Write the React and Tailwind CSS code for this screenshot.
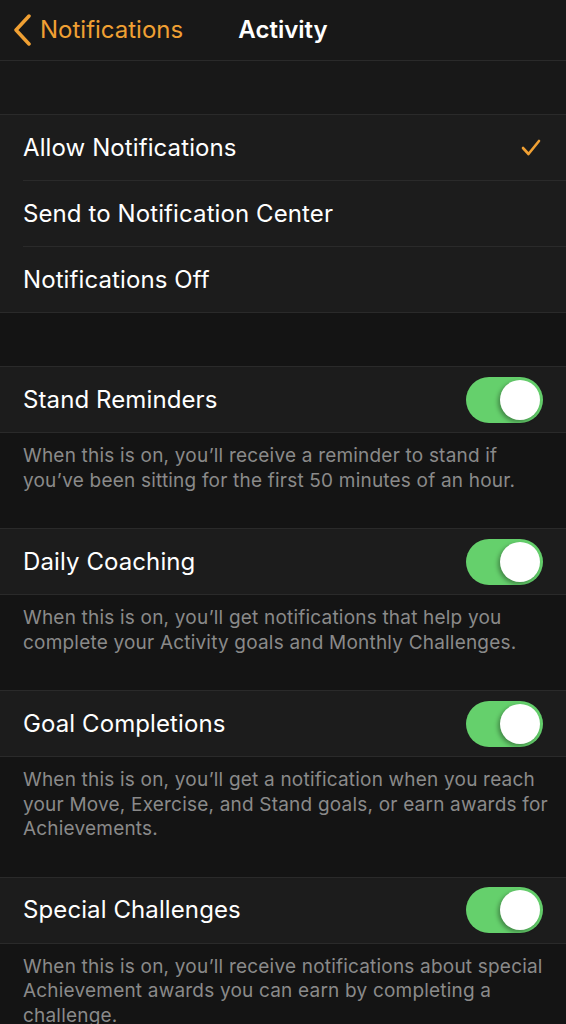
const font = { fontFamily: 'Inter, "Noto Sans", sans-serif' }

function Toggle() {
  return (
    <div className="flex h-[46px] w-[77px] items-center justify-end rounded-full bg-[#65d06c] p-[3px]">
      <div className="h-[40px] w-[40px] rounded-full bg-white shadow-[-2px_2px_4px_rgba(0,0,0,0.35)]" />
    </div>
  )
}

function ToggleGroup({ title, lines }) {
  return (
    <div>
      <div className="flex h-[67px] items-center justify-between border-y border-[#2a2a2a] bg-[#1c1c1c] pl-[23px] pr-[23px]">
        <span className="text-[24px] tracking-[0.1px] text-white">{title}</span>
        <Toggle />
      </div>
      <p className="bg-[#141414] pb-[35px] pl-[23px] pr-[10px] pt-[11px] text-[19px] leading-[24.5px] tracking-[0.2px] text-[#8a8a8a]">
        {lines.map((l, i) => (
          <span key={i} className="block whitespace-nowrap">{l}</span>
        ))}
      </p>
    </div>
  )
}

export default function App() {
  return (
    <div className="min-h-[1024px] w-[566px] overflow-hidden bg-[#141414]" style={font}>
      <div className="relative flex h-[61px] items-center justify-center border-b border-[#2a2a2a] bg-[#181818]">
        <div className="absolute left-[12px] top-0 flex h-full items-center gap-[8px] text-[#f0a033]">
          <svg width="20" height="32" viewBox="0 0 20 32">
            <path d="M17 2 L4 16 L17 30" fill="none" stroke="#f0a033" strokeWidth="3.5" strokeLinecap="round" strokeLinejoin="round" />
          </svg>
          <span className="text-[24px]">Notifications</span>
        </div>
        <span className="text-[24px] font-semibold text-white">Activity</span>
      </div>

      <div className="h-[53px] bg-[#181818]" />

      <div className="border-y border-[#2a2a2a] bg-[#1c1c1c] pl-[23px]">
        <div className="flex h-[66px] items-center justify-between border-b border-[#2a2a2a] pr-[25px]">
          <span className="text-[24px] tracking-[0.1px] text-white">Allow Notifications</span>
          <svg width="20" height="17" viewBox="0 0 20 17">
            <path d="M2 9 L7.5 15 L18 2" fill="none" stroke="#f0a033" strokeWidth="2.6" strokeLinecap="round" strokeLinejoin="round" />
          </svg>
        </div>
        <div className="flex h-[66px] items-center border-b border-[#2a2a2a]">
          <span className="text-[24px] tracking-[0.1px] text-white">Send to Notification Center</span>
        </div>
        <div className="flex h-[65px] items-center">
          <span className="text-[24px] tracking-[0.1px] text-white">Notifications Off</span>
        </div>
      </div>

      <div className="h-[53px] bg-[#141414]" />

      <ToggleGroup
        title="Stand Reminders"
        lines={[
          'When this is on, you’ll receive a reminder to stand if',
          'you’ve been sitting for the first 50 minutes of an hour.',
        ]}
      />
      <ToggleGroup
        title="Daily Coaching"
        lines={[
          'When this is on, you’ll get notifications that help you',
          'complete your Activity goals and Monthly Challenges.',
        ]}
      />
      <ToggleGroup
        title="Goal Completions"
        lines={[
          'When this is on, you’ll get a notification when you reach',
          'your Move, Exercise, and Stand goals, or earn awards for',
          'Achievements.',
        ]}
      />
      <ToggleGroup
        title="Special Challenges"
        lines={[
          'When this is on, you’ll receive notifications about special',
          'Achievement awards you can earn by completing a',
          'challenge.',
        ]}
      />
    </div>
  )
}
